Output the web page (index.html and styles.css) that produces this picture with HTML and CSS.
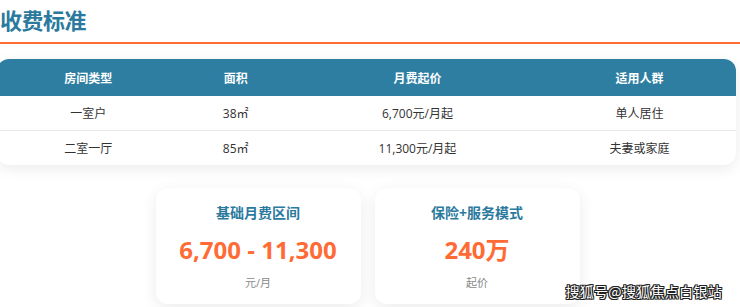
FILE: index.html
```html
<!DOCTYPE html>
<html lang="zh-CN">
<head>
<meta charset="utf-8">
<title>收费标准</title>
<link rel="stylesheet" href="styles.css">
</head>
<body>
<div class="page">
  <h2 class="section-title">收费标准</h2>
  <div class="table-wrap">
    <table class="fee-table">
      <colgroup>
        <col class="c1"><col class="c2"><col class="c3"><col class="c4">
      </colgroup>
      <thead>
        <tr><th>房间类型</th><th>面积</th><th>月费起价</th><th>适用人群</th></tr>
      </thead>
      <tbody>
        <tr><td>一室户</td><td>38㎡</td><td>6,700元/月起</td><td>单人居住</td></tr>
        <tr><td>二室一厅</td><td>85㎡</td><td>11,300元/月起</td><td>夫妻或家庭</td></tr>
      </tbody>
    </table>
  </div>
  <div class="cards">
    <div class="card">
      <div class="card-title">基础月费区间</div>
      <div class="card-value">6,700 - 11,300</div>
      <div class="card-sub">元/月</div>
    </div>
    <div class="card">
      <div class="card-title">保险+服务模式</div>
      <div class="card-value">240万</div>
      <div class="card-sub">起价</div>
    </div>
  </div>
</div>
<div class="watermark">搜狐号@搜狐焦点白银站</div>
</body>
</html>
```
FILE: styles.css
```css
html, body {
  margin: 0;
  padding: 0;
  background: #ffffff;
  overflow: hidden;
}
body {
  width: 740px;
  height: 307px;
  position: relative;
  font-family: "Open Sans", "Noto Sans CJK SC", sans-serif;
  color: #333;
}
.page {
  margin-left: -3px;
  width: 739px;
}
.section-title {
  margin: 0;
  padding: 5px 0 7px 3px;
  font-size: 22px;
  line-height: 30px;
  font-weight: 700;
  color: #2b7a9e;
  border-bottom: 2px solid #ff6b35;
  width: 760px;
  letter-spacing: -0.5px;
}
.table-wrap {
  margin-top: 15px;
  border-radius: 12px;
  overflow: hidden;
  background: #fff;
  box-shadow: 0 4px 14px rgba(0, 0, 0, 0.08);
}
.fee-table {
  width: 100%;
  border-collapse: collapse;
  table-layout: fixed;
  font-size: 12px;
}
.fee-table col.c1 { width: 24.7%; }
.fee-table col.c2 { width: 15.2%; }
.fee-table col.c3 { width: 34%; }
.fee-table col.c4 { width: 26.1%; }
.fee-table th {
  background: #2e7ea2;
  color: #fff;
  font-weight: 700;
  height: 37px;
  padding: 0;
  text-align: center;
}
.fee-table td {
  height: 34px;
  padding: 0;
  text-align: center;
  color: #333;
}
.fee-table tbody tr + tr td {
  border-top: 1px solid #e8e8e8;
}
.cards {
  display: flex;
  justify-content: center;
  gap: 14px;
  margin-top: 23px;
  padding-left: 2px;
}
.card {
  width: 205px;
  background: #fff;
  border-radius: 12px;
  box-shadow: 0 4px 16px rgba(0, 0, 0, 0.08);
  padding: 16px 0 13px;
  text-align: center;
}
.card-title {
  font-size: 14px;
  line-height: 18px;
  font-weight: 700;
  color: #2b7a9e;
}
.card-value {
  margin-top: 12px;
  font-size: 24px;
  line-height: 32px;
  font-weight: 700;
  color: #ff6b35;
}
.card-sub {
  margin-top: 9px;
  font-size: 11px;
  line-height: 16px;
  color: #888;
}
.watermark {
  position: absolute;
  right: 18px;
  bottom: 7px;
  font-family: "Noto Sans CJK SC", sans-serif;
  font-size: 14px;
  line-height: 18px;
  color: #fff;
  letter-spacing: 0.3px;
  text-shadow: 1px 0 0 #222, -1px 0 0 #222, 0 1px 0 #222, 0 -1px 0 #222, 1px 1px 0 #222, -1px -1px 0 #222, 1px -1px 0 #222, -1px 1px 0 #222;
}
```
